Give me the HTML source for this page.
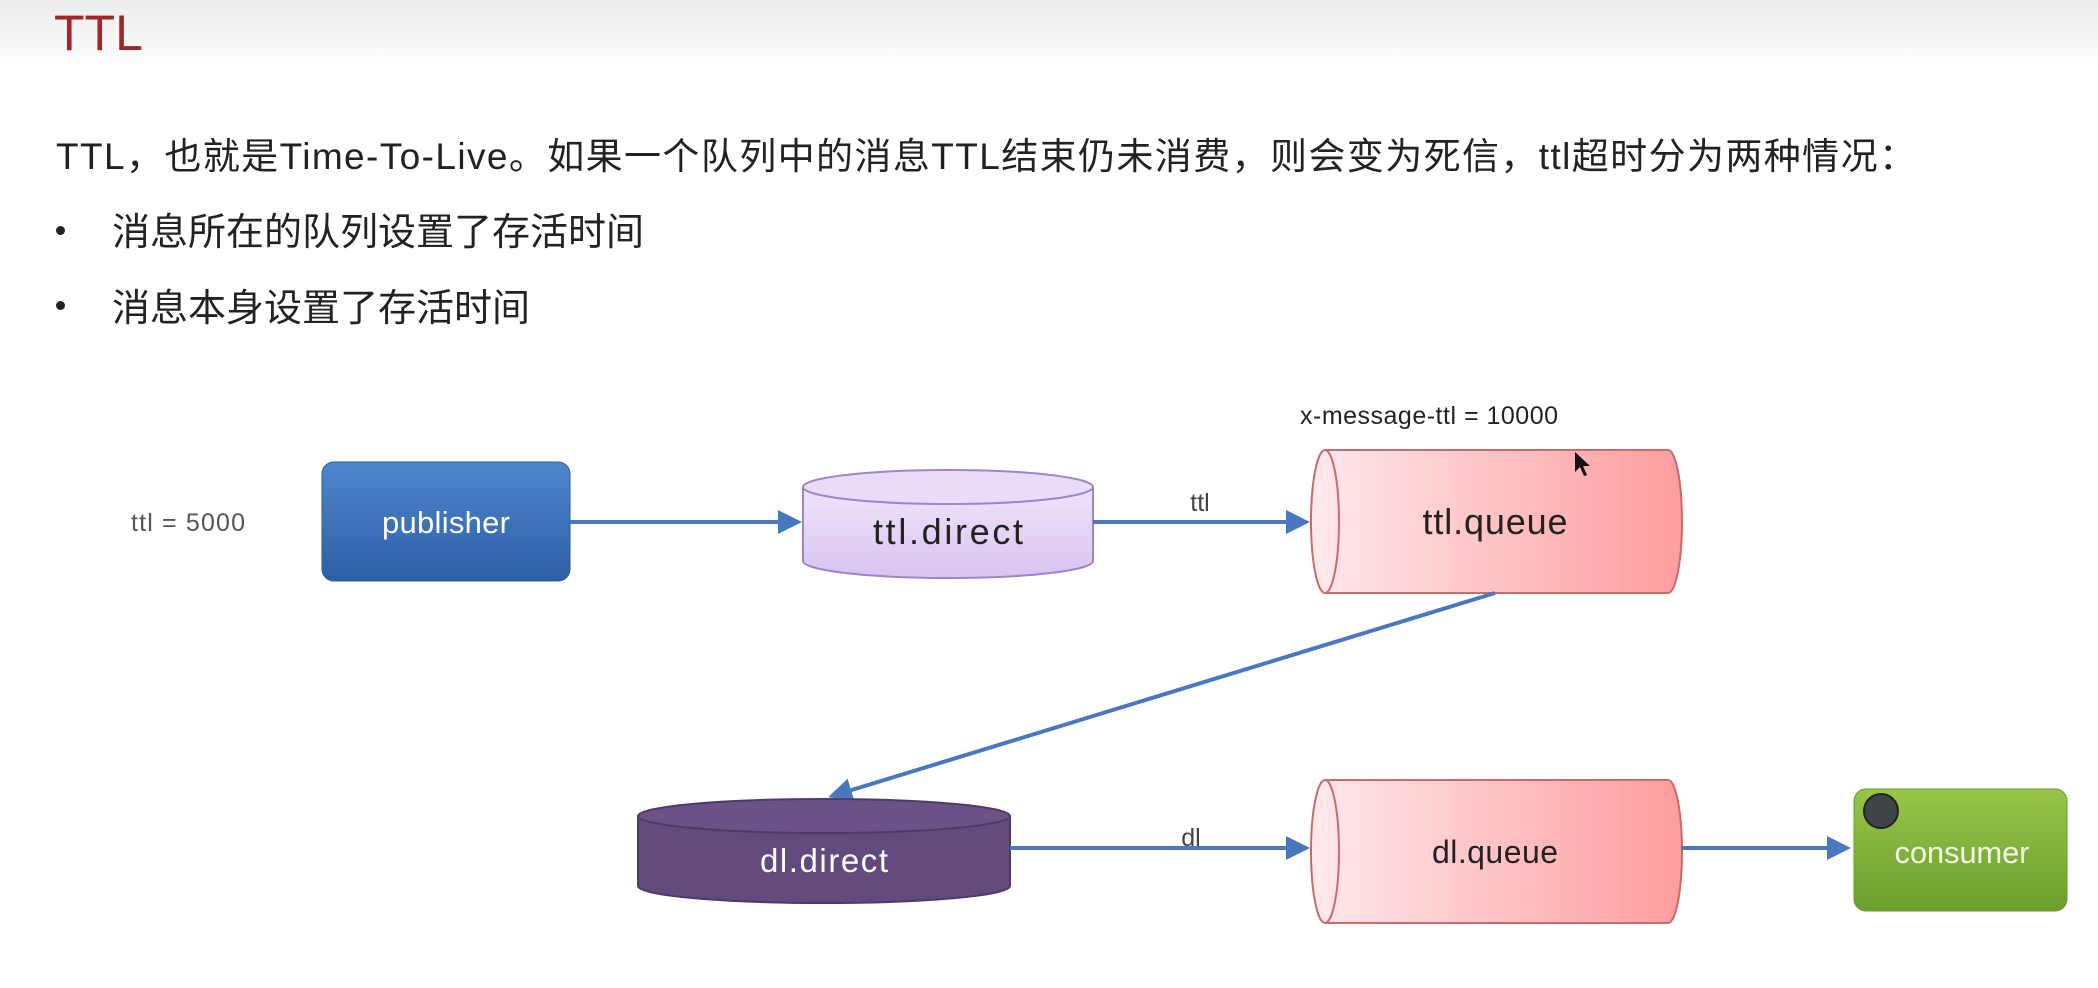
<!DOCTYPE html>
<html><head><meta charset="utf-8"><style>
html,body{margin:0;padding:0;background:#fff;}
body{width:2098px;height:988px;overflow:hidden;position:relative;font-family:"Liberation Sans","Noto Sans CJK SC",sans-serif;}
.top{position:absolute;left:0;top:0;width:2098px;height:70px;background:linear-gradient(#ececec,#fff);}
.t{position:absolute;white-space:nowrap;}
.dot{position:absolute;width:9px;height:9px;border-radius:50%;background:#222;}
</style></head><body>
<div class="top"></div>
<div class="t" style="left:54px;top:4px;font-size:50px;color:#a3262a;">TTL</div>
<div class="t" style="left:56px;top:126px;font-size:37px;color:#222;letter-spacing:1.4px;">TTL，也就是Time-To-Live。如果一个队列中的消息TTL结束仍未消费，则会变为死信，ttl超时分为两种情况：</div>
<div class="dot" style="left:56px;top:226px;"></div>
<div class="t" style="left:112px;top:201px;font-size:38px;color:#222;">消息所在的队列设置了存活时间</div>
<div class="dot" style="left:56px;top:301px;"></div>
<div class="t" style="left:112px;top:277px;font-size:38px;color:#222;">消息本身设置了存活时间</div>
<svg width="2098" height="988" style="position:absolute;left:0;top:0" font-family="Liberation Sans, sans-serif">
<defs>
<linearGradient id="pub" x1="0" y1="0" x2="0" y2="1"><stop offset="0" stop-color="#4f86cf"/><stop offset="1" stop-color="#2d5fa5"/></linearGradient>
<linearGradient id="pink" x1="0" y1="0" x2="1" y2="0"><stop offset="0" stop-color="#ffe9ec"/><stop offset="1" stop-color="#ff9c9e"/></linearGradient>
<linearGradient id="grn" x1="0" y1="0" x2="0" y2="1"><stop offset="0" stop-color="#97c64a"/><stop offset="1" stop-color="#6c9e2c"/></linearGradient>
<linearGradient id="lp" x1="0" y1="0" x2="0" y2="1"><stop offset="0" stop-color="#efe4fa"/><stop offset="1" stop-color="#d9c4f0"/></linearGradient>
<marker id="ar" markerWidth="6" markerHeight="6" refX="5" refY="3" orient="auto"><path d="M0,0 L6,3 L0,6 z" fill="#4a78bf"/></marker>
</defs>
<text x="131" y="531" font-size="25" fill="#555" textLength="114">ttl = 5000</text>
<rect x="322" y="462" width="248" height="119" rx="12" fill="url(#pub)" stroke="#2b5a9c"/>
<text x="446" y="533" font-size="31" fill="#fff" text-anchor="middle" textLength="128">publisher</text>
<line x1="570" y1="522" x2="798" y2="522" stroke="#4a78bf" stroke-width="4" marker-end="url(#ar)"/>
<path d="M803,487 L803,561 A145,17 0 0 0 1093,561 L1093,487" fill="url(#lp)" stroke="#9d86c4" stroke-width="2"/>
<ellipse cx="948" cy="487" rx="145" ry="17" fill="#eadcf8" stroke="#9d86c4" stroke-width="2"/>
<text x="948" y="544" font-size="36" fill="#222" text-anchor="middle" textLength="150">ttl.direct</text>
<line x1="1093" y1="522" x2="1306" y2="522" stroke="#4a78bf" stroke-width="4" marker-end="url(#ar)"/>
<text x="1200" y="511" font-size="25" fill="#444" text-anchor="middle">ttl</text>
<text x="1300" y="424" font-size="25" fill="#222" textLength="258">x-message-ttl = 10000</text>
<path d="M1325,450 L1668,450 A14,71.5 0 0 1 1668,593 L1325,593 A14,71.5 0 0 1 1325,450 z" fill="url(#pink)" stroke="#c86a6e" stroke-width="2"/>
<path d="M1325,450 A14,71.5 0 0 1 1325,593" fill="none" stroke="#c86a6e" stroke-width="2"/>
<text x="1495" y="534" font-size="36" fill="#222" text-anchor="middle" textLength="145">ttl.queue</text>
<path d="M1575,452 l0,20 l5,-5 l4,9 l3,-1 l-4,-9 l7,0 z" fill="#111"/>
<line x1="1495" y1="593" x2="832" y2="796" stroke="#4a78bf" stroke-width="4" marker-end="url(#ar)"/>
<path d="M638,816 L638,886 A186,17 0 0 0 1010,886 L1010,816" fill="#624a7d" stroke="#4e3a66" stroke-width="2"/>
<ellipse cx="824" cy="816" rx="186" ry="17" fill="#6a5286" stroke="#4e3a66" stroke-width="2"/>
<text x="824" y="872" font-size="33" fill="#fff" text-anchor="middle" textLength="128">dl.direct</text>
<line x1="1010" y1="848" x2="1306" y2="848" stroke="#4a78bf" stroke-width="4" marker-end="url(#ar)"/>
<text x="1191" y="846" font-size="25" fill="#444" text-anchor="middle">dl</text>
<path d="M1325,780 L1668,780 A14,71.5 0 0 1 1668,923 L1325,923 A14,71.5 0 0 1 1325,780 z" fill="url(#pink)" stroke="#c86a6e" stroke-width="2"/>
<path d="M1325,780 A14,71.5 0 0 1 1325,923" fill="none" stroke="#c86a6e" stroke-width="2"/>
<text x="1495" y="863" font-size="32" fill="#222" text-anchor="middle" textLength="126">dl.queue</text>
<line x1="1681" y1="848" x2="1847" y2="848" stroke="#4a78bf" stroke-width="4" marker-end="url(#ar)"/>
<rect x="1854" y="789" width="213" height="122" rx="12" fill="url(#grn)" stroke="#6a9a2c"/>
<circle cx="1881" cy="811" r="17" fill="#3f4446" stroke="#222" stroke-width="2"/>
<text x="1962" y="863" font-size="31" fill="#f4f8ec" text-anchor="middle" textLength="135">consumer</text>
</svg>
</body></html>
